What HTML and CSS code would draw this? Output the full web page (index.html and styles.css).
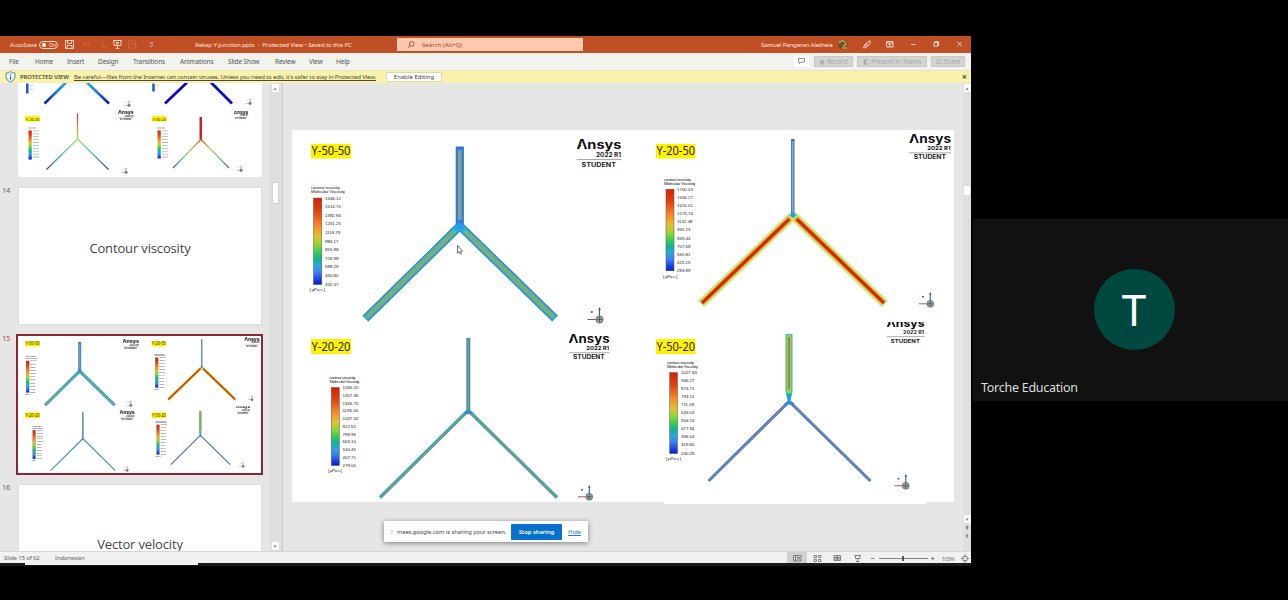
FILE: index.html
```html
<!DOCTYPE html>
<html lang="en">
<head>
<meta charset="utf-8">
<title>Rekap Y-junction.pptx</title>
<link rel="stylesheet" href="styles.css">
</head>
<body>
<svg class="defs" width="0" height="0" aria-hidden="true">
  <defs>
    <linearGradient id="rainbow" x1="0" y1="0" x2="0" y2="1">
      <stop offset="0" stop-color="#d5200c"/><stop offset=".15" stop-color="#e2400f"/><stop offset=".32" stop-color="#f58a2a"/>
      <stop offset=".44" stop-color="#e3c02e"/><stop offset=".54" stop-color="#8fd834"/><stop offset=".62" stop-color="#3ecb55"/>
      <stop offset=".7" stop-color="#10b58e"/><stop offset=".78" stop-color="#2fa6d8"/><stop offset=".86" stop-color="#3a80f2"/><stop offset="1" stop-color="#0a14d8"/>
    </linearGradient>
    <linearGradient id="stem" gradientUnits="userSpaceOnUse" x1="0" y1="114" x2="0" y2="140"><stop offset="0" stop-color="#c23a2e"/><stop offset=".5" stop-color="#e08a3a"/><stop offset="1" stop-color="#9bd65a"/></linearGradient>
    <linearGradient id="arm" gradientUnits="userSpaceOnUse" x1="0" y1="140" x2="0" y2="170"><stop offset="0" stop-color="#9be05a"/><stop offset=".45" stop-color="#45c9b5"/><stop offset="1" stop-color="#3a4590"/></linearGradient>
    <linearGradient id="arm2" gradientUnits="userSpaceOnUse" x1="0" y1="140" x2="0" y2="169"><stop offset="0" stop-color="#d84a20"/><stop offset=".3" stop-color="#e6b040"/><stop offset=".6" stop-color="#6fd080"/><stop offset="1" stop-color="#3f5aa8"/></linearGradient>
    <linearGradient id="cool" gradientUnits="userSpaceOnUse" x1="0" y1="84" x2="0" y2="104"><stop offset="0" stop-color="#1fb0d0"/><stop offset=".5" stop-color="#1b6ee0"/><stop offset="1" stop-color="#0a14b8"/></linearGradient>
    <symbol id="logo" viewBox="0 0 46 30">
      <text class="ansys" x="0" y="10.800" textLength="45" lengthAdjust="spacingAndGlyphs">Ansys</text>
      <path d="M3.800 9.700 5.800 4.800 8.200 9.700z" fill="#fff"/>
      <text class="release" x="19.500" y="19" textLength="25" lengthAdjust="spacingAndGlyphs">2022 R1</text>
      <path d="M0 21.600H45" stroke="#777" stroke-width=".7"/>
      <text class="student" x="5" y="28.700" textLength="34.500" lengthAdjust="spacingAndGlyphs">STUDENT</text>
    </symbol>
    <symbol id="triad" viewBox="0 0 18 18">
      <path d="M1 12.500H12" stroke="#b8424a" stroke-width="1"/><path d="M13 1V11" stroke="#4355b8" stroke-width="1.200"/><path d="M11.700 3 13 0 14.300 3z" fill="#4355b8"/>
      <circle cx="5.300" cy="5" r="1.100" fill="#34727a"/><circle cx="13" cy="12.500" r="3.600" fill="#8fa39b" stroke="#6a7975"/><path d="M10.500 12.500h5M13 10v5" stroke="#40504c" stroke-width=".8"/>
    </symbol>
    <symbol id="results" viewBox="292 130 662 374">
      <path d="M292 130H954V502H926V504H664V502H292z" fill="#fff"/>
      <path d="M311 144h40v14.500h-40zM656 144h39.500v14.500H656zM311 339h40v15h-40zM656 339h39.500v15H656z" fill="#fff200"/>
      <g class="case">
        <text x="311.500" y="155.400" textLength="39" lengthAdjust="spacingAndGlyphs">Y-50-50</text><text x="656.500" y="155.400" textLength="38.500" lengthAdjust="spacingAndGlyphs">Y-20-50</text>
        <text x="311.500" y="351" textLength="39" lengthAdjust="spacingAndGlyphs">Y-20-20</text><text x="656.500" y="351" textLength="38.500" lengthAdjust="spacingAndGlyphs">Y-50-20</text>
      </g>
      <use href="#logo" x="576.500" y="138" width="46" height="30"/>
      <use href="#logo" x="909" y="132.700" width="43" height="28"/>
      <use href="#logo" x="568.500" y="333" width="42" height="27.400"/>
      <use href="#logo" x="886.500" y="318.300" width="39" height="25.400"/>
      <path d="M884 315h44v7h-44z" fill="#fff"/>

      <g fill="none">
        <path d="M459.800 146.500V226L365.500 318.500M459.800 226 555 318.500" stroke="#3777d2" stroke-width="8.200"/>
        <path d="M459.800 226 365.500 318.500M459.800 226 555 318.500" stroke="#27afd8" stroke-width="6.600"/>
        <path d="M459.800 150V220" stroke="#4cabc5" stroke-width="4"/>
        <path d="M455 230.700 366.500 317.500M464.600 230.700 554 317.500" stroke="#62bf87" stroke-width="3.600"/>
        <path d="M459.800 151V218M453 232.700 367 317M466.700 232.700 553.500 317" stroke="#b9963e" stroke-width="1.500"/>
        <circle cx="459.800" cy="226" r="3.500" fill="#2699ed"/>

        <path d="M793 215.500 701 304M793 215.500 885 304" stroke="#b5ef91" stroke-width="9"/>
        <path d="M791 217.400 702 303M795 217.400 884 303" stroke="#e5dc45" stroke-width="6.400"/>
        <path d="M790 218.400 702 303M796 218.400 884 303" stroke="#f07729" stroke-width="4.500"/>
        <path d="M789 219.300 702 303M797 219.300 884 303" stroke="#ca2b08" stroke-width="2.800"/>
        <path d="M792.800 139V215" stroke="#4265b0" stroke-width="3.400"/><path d="M792.800 141V213" stroke="#77a9d5" stroke-width="1.700"/>
        <path d="M789.500 215.500 793 211.500 796.500 215.500 793 218z" fill="#20a6d6"/>

        <path d="M468.300 338V411" stroke="#47819d" stroke-width="3.900"/><path d="M468.300 339V411" stroke="#70a5a1" stroke-width="1.500"/>
        <path d="M380 497.500 464.500 414Q468.300 410.500 472 414L557 497.500" stroke="#3fa4b1" stroke-width="3.500"/>
        <path d="M381 496.500 464 414.500M473 414.500 556 496.500" stroke="#789c86" stroke-width="1.500"/>
        <path d="M464.500 413.500Q468.300 410 472 413.500" stroke="#2e89d8" stroke-width="3"/>

        <path d="M785.500 334H792.500V392L790.500 401H787.700L785.500 392z" fill="#32bdb5"/><path d="M789 335V393" stroke="#9bd34b" stroke-width="4.600"/><path d="M789 337V389" stroke="#bd6f28" stroke-width="1.800"/>
        <path d="M787 394h4l-1 7h-2z" fill="#249fdb"/>
        <path d="M708.500 481 785.500 405Q789.200 400.500 793 405L870.500 481" stroke="#446fc9" stroke-width="3"/><path d="M709 480.500 785 405.500M794 405.500 870 480.500" stroke="#7e8cad" stroke-width="1.100"/>
        <path d="M785.500 404.500Q789.200 400.500 793 404.500" stroke="#2789df" stroke-width="3"/>
      </g>

      <g fill="url(#rainbow)" stroke="#555" stroke-width=".5">
        <rect x="313.500" y="198" width="8.300" height="86.500"/><rect x="666" y="189.200" width="8" height="81.600"/>
        <rect x="331.300" y="387.500" width="8" height="78"/><rect x="669.700" y="372.600" width="7.800" height="81"/>
      </g>
      <g class="scale">
        <text x="311" y="188.600" textLength="29">contour viscosity</text><text x="311" y="192.800" textLength="34">Molecular Viscosity</text>
        <text x="325" y="199.600">1646.12</text><text x="325" y="208.200">1514.70</text><text x="325" y="216.800">1382.84</text><text x="325" y="225.400">1251.25</text><text x="325" y="234">1118.79</text><text x="325" y="242.600">986.17</text><text x="325" y="251.200">855.98</text><text x="325" y="259.800">728.98</text><text x="325" y="268.400">588.29</text><text x="325" y="277">460.80</text><text x="325" y="285.600">332.37</text><text x="309.500" y="291.300" textLength="15.500">[ µPa·s ]</text>
        <text x="664" y="180.800" textLength="27">contour viscosity</text><text x="664" y="185" textLength="31.500">Molecular Viscosity</text>
        <text x="677" y="190.900">1700.03</text><text x="677" y="199">1556.27</text><text x="677" y="207.100">1415.01</text><text x="677" y="215.200">1273.74</text><text x="677" y="223.300">1132.48</text><text x="677" y="231.400">991.23</text><text x="677" y="239.500">849.44</text><text x="677" y="247.600">707.68</text><text x="677" y="255.700">565.81</text><text x="677" y="263.800">425.15</text><text x="677" y="271.900">283.89</text><text x="663" y="277.500" textLength="14.500">[ µPa·s ]</text>
        <text x="329.500" y="379.300" textLength="26">contour viscosity</text><text x="329.500" y="383.300" textLength="30">Molecular Viscosity</text>
        <text x="342.500" y="389.100">1565.20</text><text x="342.500" y="396.900">1457.36</text><text x="342.500" y="404.600">1326.70</text><text x="342.500" y="412.300">1196.03</text><text x="342.500" y="420.100">1057.32</text><text x="342.500" y="427.800">922.61</text><text x="342.500" y="435.600">789.96</text><text x="342.500" y="443.300">663.15</text><text x="342.500" y="451">534.45</text><text x="342.500" y="458.800">407.71</text><text x="342.500" y="466.500">279.00</text><text x="328" y="471.500" textLength="14">[ µPa·s ]</text>
        <text x="667" y="364.200" textLength="27">contour viscosity</text><text x="667" y="368.400" textLength="31">Molecular Viscosity</text>
        <text x="681" y="374.200">1027.83</text><text x="681" y="382.200">946.27</text><text x="681" y="390.200">874.71</text><text x="681" y="398.200">793.15</text><text x="681" y="406.200">711.59</text><text x="681" y="414.200">633.03</text><text x="681" y="422.300">556.16</text><text x="681" y="430.300">477.94</text><text x="681" y="438.300">396.04</text><text x="681" y="446.400">318.80</text><text x="681" y="454.500">240.28</text><text x="666" y="459.800" textLength="15">[ µPa·s ]</text>
      </g>
      <use href="#triad" x="586.500" y="307" width="18" height="18"/><use href="#triad" x="918" y="292" width="17" height="17"/><use href="#triad" x="577" y="485" width="17" height="17"/><use href="#triad" x="893.500" y="474" width="17" height="17"/>
    </symbol>
  </defs>
</svg>

<main class="stage">
  <section class="app">
    <header class="titlebar">
      <span class="autosave">AutoSave</span>
      <span class="toggle"><i></i>On</span>
      <svg class="quick" viewBox="60 36 100 17" fill="none" stroke="#ffd9c8" stroke-width=".9">
        <path d="M65.500 40.500h8v8h-8zM67.500 40.500v3h4v-3M67 48.500v-3h5v3"/>
        <path d="M84 42v3h3M84.500 44.500q2-3 4.500-1.500t-1 4.500M104 42q-3 1-2 4t5 0" stroke="#d5653e"/>
        <path d="M113 40.500h9M114 40.500v5h7v-5M117.500 45.500v3M115.500 48.500h4M116.500 42l2.500 1.200-2.500 1.200z"/>
        <path d="M128.500 41h7v7h-7zM131 44h5v4" stroke="#d5653e"/><path d="M150 43h3M150 45l1.500 1.700 1.500-1.700"/>
      </svg>
      <span class="doc">Rekap Y-junction.pptx&nbsp; -&nbsp; Protected View • Saved to this PC</span>
      <span class="search"><svg width="8" height="8" viewBox="0 0 8 8" fill="none" stroke="#a5452a" stroke-width=".9"><circle cx="4.700" cy="3" r="2.300"/><path d="M3 4.700.7 7.200"/></svg>Search (Alt+Q)</span>
      <span class="user">Samuel Pangeran Aletheia</span>
      <svg class="winctl" viewBox="834 36 137 17" fill="none" stroke="#ffe3d8" stroke-width=".9">
        <circle cx="843" cy="44.500" r="5" fill="#77511f" stroke="none"/><path d="M839 43q3-4 6-1t-2 4M842 48h5" stroke="#b9a456" stroke-width="1.500"/>
        <path d="M863.500 48q.3-3 4-6l2.500-1.200q.8 3-2 5.200t-4.500 2zM865 46l3-2"/>
        <path d="M886.500 41.500h6.500v5.500h-6.500zM886.500 43h6.500M889.700 46.500v-2.500M888.500 45l1.200-1.200 1.200 1.200M911 44.500h4.500M934 42.500h3.500v3.800h-3.500zM935 42.500v-1h3.700v4H937.500M957.500 42l4 4.500M961.500 42l-4 4.500"/>
      </svg>
    </header>

    <nav class="tabs">
      <span>File</span><span>Home</span><span>Insert</span><span>Design</span><span>Transitions</span><span>Animations</span><span>Slide Show</span><span>Review</span><span>View</span><span>Help</span>
      <div class="actions">
        <b class="comment"><svg width="7" height="6" viewBox="0 0 7 6" fill="none" stroke="#777" stroke-width=".8"><path d="M.5.5h6v3.500H3L1.500 5.500V4h-1z"/></svg></b>
        <b class="record">◉ Record</b><b class="present">◧ Present in Teams</b><b class="share">⊡ Share</b>
      </div>
    </nav>

    <div class="warning">
      <svg width="11" height="12" viewBox="0 0 11 12"><path d="M5.500.7Q7.500 2 10 2.200V6q-.3 3.500-4.500 5.300Q1.300 9.500 1 6V2.200Q3.500 2 5.500.7z" fill="#eef6f4" stroke="#4d8dab"/><path d="M5.500 3v1.200M5.500 5.200v3.600" stroke="#2c6ea5" stroke-width="1.200"/></svg>
      <strong>PROTECTED VIEW</strong>
      <u>Be careful—files from the Internet can contain viruses. Unless you need to edit, it's safer to stay in Protected View.</u>
      <button>Enable Editing</button>
      <span class="close">×</span>
    </div>

    <div class="work">
      <aside class="thumbs">
        <div class="list">
          <div class="row first"><span class="num"></span>
            <svg class="thumb t13" viewBox="18 84 244 93" fill="none">
              <path d="M66 83 44.500 104M87 83 109 104" stroke="url(#cool)" stroke-width="2.600"/><path d="M187 83 165 104M211 83 232 104" stroke="#0b0dbd" stroke-width="2.800"/>
              <path d="M27.300 84V94M153.500 84V92" stroke="#245fc0" stroke-width="2.600"/>
              <path d="M29.500 86h4M29.500 90h4M156 86h3" stroke="#bbb" stroke-width=".6"/>
              <path d="M25 116.500h15v5.500H25zM152 116.500h14.500v5.500H152z" fill="#fff200"/>
              <g class="case mini"><text x="25.800" y="121.100" textLength="13.500">Y-20-20</text><text x="152.500" y="121.100" textLength="13.500">Y-50-20</text></g>
              <path d="M77.500 114V140" stroke="url(#stem)" stroke-width="1.300"/><path d="M77.500 139.500 46.500 170M77.500 139.500 108.500 170" stroke="url(#arm)" stroke-width="1.200"/>
              <path d="M200.800 117.500V140" stroke="#c2282a" stroke-width="2.600"/><path d="M201 140 173 168.500M201 140 229 168.500" stroke="url(#arm2)" stroke-width="1.200"/>
              <g fill="url(#rainbow)"><rect x="28.500" y="131" width="3.300" height="29"/><rect x="157.500" y="131" width="3.300" height="28"/></g>
              <path d="M36 131v29M165 131v28" stroke="#b4b4b4" stroke-width="6" stroke-dasharray=".8 2.100"/><path d="M28 128.500h8M157 128.500h8" stroke="#aaa"/>
              <use href="#logo" x="118" y="110.500" width="16" height="10.500"/><use href="#logo" x="233.500" y="110.500" width="15" height="10"/>
              <use href="#triad" x="124" y="101" width="7" height="7"/><use href="#triad" x="245" y="99" width="7" height="7"/><use href="#triad" x="121" y="168" width="7" height="7"/><use href="#triad" x="236" y="166" width="7" height="7"/>
            </svg></div>
          <div class="row"><span class="num">14</span><div class="thumb words">Contour viscosity</div></div>
          <div class="row picked"><span class="num">15</span><svg class="thumb t15"><use href="#results"/></svg></div>
          <div class="row last"><span class="num">16</span><div class="thumb words next">Vector velocity</div></div>
        </div>
        <div class="rail"><i>▴</i><em></em><i class="down">▾</i></div>
      </aside>
      <section class="canvas">
        <svg class="slide"><use href="#results"/></svg>
        <div class="rail"><i>▴</i><em></em><i class="down">▾</i><span>⇞</span><span>⇟</span></div>
        <svg class="cursor" viewBox="0 0 6 10"><path d="M.5.5v7.700l1.700-1.500 1.200 2.500 1.200-.5-1.100-2.500h2z" fill="#fff" stroke="#333" stroke-width=".7"/></svg>
        <div class="sharing"><span class="grip">⠿</span><span class="msg">meet.google.com is sharing your screen.</span><button>Stop sharing</button><a>Hide</a></div>
      </section>
    </div>

    <footer class="status">
      <span class="count">Slide 15 of 62</span><span class="lang">Indonesian</span>
      <svg class="views" viewBox="786 551 185 12" fill="none" stroke="#777" stroke-width=".9">
        <path d="M787 551h20v12h-20z" fill="#d0d0d0" stroke="none"/>
        <path d="M793.500 554.500h7.500v5.500h-7.500zM795.500 554.500v5.500M797 556.500h3M797 558h3"/>
        <path d="M814 554.500h2.500v2h-2.500zM818.500 554.500h2.500v2h-2.500zM814 558.500h2.500v2h-2.500zM818.500 558.500h2.500v2h-2.500z"/>
        <path d="M834 554.500h3.300v5H834zM837.300 554.500h3.300v5h-3.300zM834 556.500h6.500M834 558h6.500"/>
        <path d="M854.500 554.500h6.500M855.500 554.500v3h4.500v-3M857.700 557.500v3M856 560.500h3.500"/>
        <path d="M871 557.500h3.500M931 557.500h3.500M932.700 555.800v3.500M879 557.500h49"/><path d="M903 555v5" stroke="#555" stroke-width="2"/>
        <text x="941.500" y="560" textLength="13">103%</text>
        <path d="M963 555.500h4v4h-4zM965 553v2.500M965 559.500v2.500M961 557.500h2M967 557.500h2"/>
      </svg>
    </footer>
    <div class="taskbar"><i></i></div>
  </section>

  <section class="participant">
    <div class="avatar">T</div>
    <span class="name">Torche Education</span>
  </section>
</main>
</body>
</html>
```
FILE: styles.css
```css
* { box-sizing: border-box; }
body { margin: 0; width: 1288px; height: 600px; overflow: hidden; background: #000; font-family: "Noto Sans", "Open Sans", sans-serif; }
.defs { position: absolute; }
.stage { display: grid; grid-template-columns: 971px 315px; column-gap: 2px; padding-top: 36px; align-items: start; }
.app { display: grid; grid-template-rows: 17px 17px 13px 468px 12px 3px; height: 530px; background: #e6e6e6; overflow: hidden; }

.titlebar { display: grid; grid-template-columns: 29px 21px 135px 202px 186px 178px 73px 137px; padding-left: 10px; align-items: center; background: #c14f25; color: #ffe9df; font-size: 6.1px; white-space: nowrap; }
.toggle { display: flex; align-items: center; gap: 3px; width: 19px; height: 8px; padding-left: 2px; border: 1px solid #ffd9c8; border-radius: 4px; font-size: 5px; line-height: 6px; }
.toggle i { width: 4px; height: 4px; border-radius: 50%; background: #fff; }
.quick { width: 100px; height: 17px; }
.doc { font-size: 6px; letter-spacing: -.09px; }
.search { display: flex; align-items: center; gap: 7px; height: 13px; padding-left: 10px; background: #ffc9ae; color: #a5452a; }
.user { grid-column: 7; letter-spacing: -.16px; }
.winctl { width: 137px; height: 17px; }

.tabs { display: grid; grid-template-columns: 26px 32px 31px 35px 47px 48px 47px 34px 27px 1fr auto; padding: 0 6px 1px 9px; align-items: center; background: #f2f2ef; color: #555; font-size: 6.5px; white-space: nowrap; letter-spacing: -.12px; }
.actions { grid-column: 11; display: flex; gap: 4px; }
.actions b { display: flex; align-items: center; justify-content: center; height: 11px; border: 1px solid #c7c7c5; background: #d4d4d2; color: #aaa; font-weight: 400; font-size: 6.5px; }
.actions .comment { width: 15px; border-color: #fff; background: #fff; margin-right: 1px; }
.record { width: 39px; }
.present { width: 70px; }
.share { width: 34px; }

.warning { display: flex; align-items: center; padding: 0 4px 1px 5px; background: #f9f2ad; color: #4c4b35; font-size: 6.1px; white-space: nowrap; border-top: 1px solid #e9e4bd; }
.warning strong { width: 54px; margin-left: 4px; font-size: 5.9px; letter-spacing: -.05px; font-weight: 600; }
.warning u { width: 312px; letter-spacing: -.195px; }
.warning button { width: 56px; height: 10px; padding: 0; border: 1px solid #ddd8ae; background: #fff; color: #444; font: 6px "Noto Sans", sans-serif; }
.warning .close { margin-left: auto; font-size: 9px; line-height: 9px; font-weight: 700; }

.work { display: grid; grid-template-columns: 282px 689px; overflow: hidden; }
.thumbs { display: grid; grid-template-columns: 270px 10px; height: 468px; border-right: 1px solid #d2d2d2; overflow: hidden; }
.list { display: flex; flex-direction: column; gap: 10px; height: 468px; overflow: hidden; }
.row { display: grid; grid-template-columns: 18px 244px; flex: none; height: 138px; }
.row.first { height: 94px; }
.row.picked { grid-template-columns: 16px 247px; height: 141px; margin-top: -1px; }
.row.last { height: 68px; margin-top: -1px; }
.num { padding-left: 2px; font-size: 7.6px; line-height: 7px; letter-spacing: -.3px; color: #666; }
.picked .num { color: #b54c4c; padding-top: 1px; }
.thumb { display: block; width: 244px; height: 138px; background: #fff; border: 1px solid #dcdcdc; }
.t13 { height: 94px; border: 0; }
.t15 { width: 247px; height: 141px; border: 2px solid #8d2632; }
.words { padding-top: 53px; text-align: center; font: 13px/14px "Open Sans", "Noto Sans", sans-serif; letter-spacing: -.15px; color: #444; }
.next { height: 68px; padding-top: 52px; border-bottom: 0; }
.rail { display: flex; flex-direction: column; align-items: center; background: #dfdfdf; }
.rail i { width: 7px; height: 8px; margin-top: 1px; background: #fafafa; color: #777; font: 5px/8px "DejaVu Sans", sans-serif; text-align: center; }
.rail .down { margin-top: auto; margin-bottom: 1px; }
.thumbs .rail em { width: 7px; height: 22px; margin-top: 90px; background: #fff; border: 1px solid #d3d3d3; }
.canvas { position: relative; display: grid; grid-template-columns: 1fr 8px; border-left: 1px solid #d2d2d2; }
.slide { width: 662px; height: 374px; margin: 47px 0 0 9px; }
.canvas .rail em { width: 6px; height: 9px; margin-top: 94px; background: #fff; }
.canvas .rail { padding-bottom: 11px; }
.canvas .rail span { height: 8px; font: 6px/8px "DejaVu Sans", sans-serif; color: #666; }
.cursor { position: absolute; left: 174px; top: 162px; width: 6px; height: 10px; }
.sharing { position: absolute; left: 101px; top: 438px; width: 204px; height: 21px; display: flex; align-items: center; padding-left: 6px; background: #fff; box-shadow: 0 1px 5px #0007; font-size: 5.9px; letter-spacing: -.08px; color: #444; white-space: nowrap; }
.grip { width: 7px; color: #aaa; font-size: 5px; }
.msg { width: 114px; }
.sharing button { width: 51px; height: 16px; padding: 0; border: 0; border-radius: 1px; background: #0871cd; color: #fff; font: 600 5.8px "Noto Sans", sans-serif; }
.sharing a { margin-left: 6px; color: #2878bd; font-size: 6.1px; text-decoration: underline; }

.status { display: flex; align-items: center; padding-left: 4px; background: #f1f1f1; border-top: 1px solid #d6d6d6; font-size: 6px; color: #666; white-space: nowrap; letter-spacing: -.14px; }
.count { width: 51px; }
.lang { font-size: 5.8px; letter-spacing: -.08px; }
.views { width: 185px; height: 12px; margin-left: auto; }
.views text { fill: #777; stroke: none; font-size: 6px; }
.taskbar { background: #161a1b; padding-left: 25px; }
.taskbar i { display: block; width: 173px; height: 2px; background: #f1f1f1; }

.participant { display: grid; grid-template-rows: 1fr auto; justify-items: center; height: 182px; margin-top: 183px; padding: 50px 0 4px 8px; background: #111; }
.avatar { width: 81px; height: 81px; border-radius: 50%; background: #004840; color: #fff; font: 44px/81px "Noto Sans", sans-serif; text-align: center; margin-left: -1px; }
.name { justify-self: start; font-size: 12.5px; line-height: 18px; color: #dedede; letter-spacing: -.26px; }

.case { fill: #252510; font: 12px "Noto Sans", sans-serif; }
.mini { font-size: 4px; }
.scale { fill: #222; font: 4.4px "Liberation Sans", sans-serif; }
.ansys { font: 700 12.6px Inter, sans-serif; fill: #111; }
.release { font: 700 5.8px Inter, sans-serif; fill: #222; }
.student { font: 700 6.2px Inter, sans-serif; fill: #222; }
```
